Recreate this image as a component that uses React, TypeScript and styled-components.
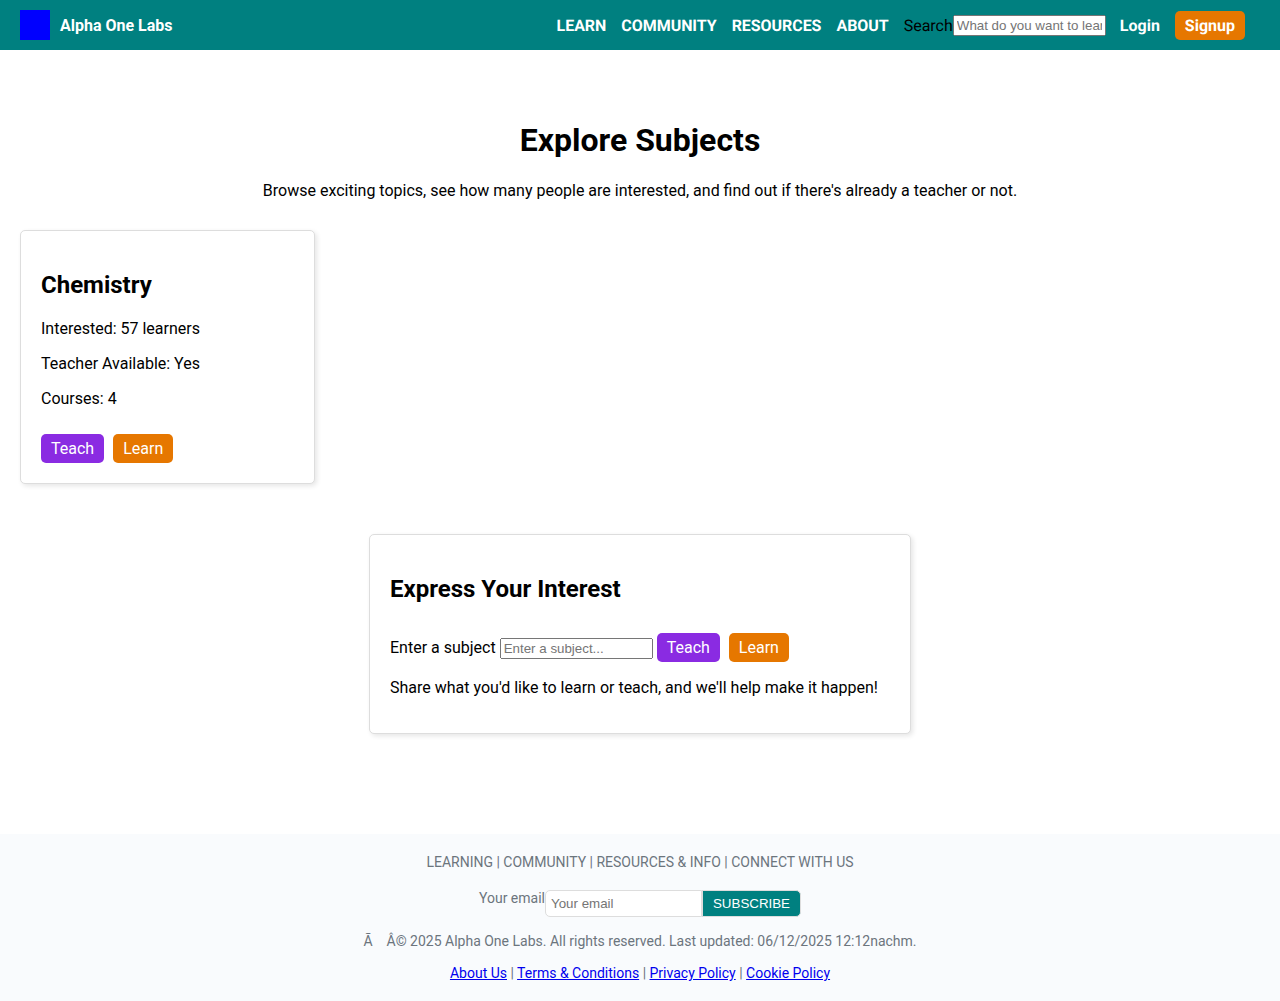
import React from "react";
import styled, { createGlobalStyle } from "styled-components";

const GlobalStyle = createGlobalStyle`
  body { margin: 0; font-family: Roboto, sans-serif; background: #fff; color: #000; }
`;

const Header = styled.header`
  display: flex; justify-content: space-between; align-items: center;
  box-sizing: border-box; height: 50px; padding: 10px 20px; background: #008080; color: #fff;
`;
const Brand = styled.div`display: flex; align-items: center; font-weight: bold;`;
const Logo = styled.div`width: 30px; height: 30px; margin-right: 10px; background: #00f;`;
const Nav = styled.nav`display: flex; align-items: center; text-rendering: geometricPrecision;`;
const NavLink = styled.a`margin-right: 15px; color: #fff; font-weight: bold; text-decoration: none;`;
const MenuLink = styled(NavLink)`letter-spacing: -0.05px;`;
const SearchForm = styled.form`display: flex; align-items: center; margin-right: 14px; color: #000;`;
const Field = styled.input`
  box-sizing: border-box; width: 153px; height: 21px;
  font: 13.333px "Liberation Sans", Arial, sans-serif;
`;
const SignupLink = styled(NavLink)`padding: 5px 10px; border-radius: 5px; background: #e67700;`;

const Main = styled.main`padding: 50px 20px;`;
const Intro = styled.section`text-align: center;`;
const Title = styled.h1`margin: 21px 0 22px; font-size: 32px; line-height: 38px;`;
const Text = styled.p`margin: 16px 0; line-height: 19px;`;
const Subjects = styled.section`
  display: grid; grid-template-columns: repeat(4, 295px); gap: 20px; margin-top: 30px;
`;
const Card = styled.article`
  box-sizing: border-box; padding: 20px; border: 1px solid #ddd; border-radius: 5px;
  background: #fff; box-shadow: 2px 2px 5px rgba(0, 0, 0, 0.1);
`;
const InterestCard = styled(Card)`width: 542px; margin: 50px auto;`;
const Heading = styled.h2`margin: 20px 0; font-size: 24px; line-height: 28px;`;
const Actions = styled.div`display: flex; gap: 9px; margin-top: 26px;`;
const Action = styled.button<{ $color: string }>`
  padding: 5px 10px; border: 0; border-radius: 5px; background: ${(p) => p.$color};
  color: #fff; font: 400 16px/19px Roboto, sans-serif;
`;
const InterestForm = styled.form`
  display: flex; align-items: center; gap: 4px; margin-top: 30px;
  ${Field} { margin-top: 2px; }
  ${Action} + ${Action} { margin-left: 5px; }
`;

const Footer = styled.footer`
  box-sizing: border-box; height: 167px; padding: 20px; background: #f9fbfd; color: #6c757d;
  font-size: 14px; line-height: 16px; text-align: center;
`;
const FooterText = styled.p`margin: 0 0 16px; white-space: pre;`;
const Subscribe = styled.form`display: flex; justify-content: center; margin: 20px 0 16px;`;
const EmailField = styled.input`
  box-sizing: border-box; width: 157px; height: 27px; padding: 5px;
  border: 1px solid #ddd; border-radius: 5px 0 0 5px;
  font: 13.333px "Liberation Sans", Arial, sans-serif;
`;
const SubscribeButton = styled.button`
  box-sizing: border-box; width: 99px; height: 27px; padding: 5px 0; border: 1px solid #ddd;
  border-radius: 0 5px 5px 0; background: #008080; color: #fff;
  font: 13.333px "Liberation Sans", Arial, sans-serif;
`;
const FooterLink = styled.a`color: #0000ee; text-decoration: underline;`;

const navigation = ["LEARN", "COMMUNITY", "RESOURCES", "ABOUT"];
const legal = ["About Us", "Terms & Conditions", "Privacy Policy", "Cookie Policy"];

const RoleActions = () => (
  <>
    <Action type="button" $color="#8a2be2">Teach</Action>
    <Action type="button" $color="#e67700">Learn</Action>
  </>
);

export default function App() {
  return (
    <>
      <GlobalStyle />
      <Header>
        <Brand><Logo />Alpha One Labs</Brand>
        <Nav>
          {navigation.map((item) => <MenuLink key={item} href="#">{item}</MenuLink>)}
          <SearchForm><label htmlFor="search">Search</label><Field id="search" placeholder="What do you want to learn?" /></SearchForm>
          <NavLink href="#">Login</NavLink>
          <SignupLink href="#">Signup</SignupLink>
        </Nav>
      </Header>
      <Main>
        <Intro>
          <Title>Explore Subjects</Title>
          <Text>Browse exciting topics, see how many people are interested, and find out if there's already a teacher or not.</Text>
        </Intro>
        <Subjects>
          <Card>
            <Heading>Chemistry</Heading>
            <Text>Interested: 57 learners</Text>
            <Text>Teacher Available: Yes</Text>
            <Text>Courses: 4</Text>
            <Actions><RoleActions /></Actions>
          </Card>
        </Subjects>
        <InterestCard>
          <Heading>Express Your Interest</Heading>
          <InterestForm>
            <label htmlFor="subject">Enter a subject</label>
            <Field id="subject" placeholder="Enter a subject..." />
            <RoleActions />
          </InterestForm>
          <Text>Share what you'd like to learn or teach, and we'll help make it happen!</Text>
        </InterestCard>
      </Main>
      <Footer>
        <FooterText>LEARNING | COMMUNITY | RESOURCES &amp; INFO | CONNECT WITH US</FooterText>
        <Subscribe>
          <label htmlFor="email">Your email</label>
          <EmailField id="email" placeholder="Your email" />
          <SubscribeButton type="button">SUBSCRIBE</SubscribeButton>
        </Subscribe>
        <FooterText>{"Ã\u00a0\u00a0\u00a0 Â© 2025 Alpha One Labs. All rights reserved. Last updated: 06/12/2025 12:12nachm."}</FooterText>
        <FooterText>
          {legal.map((item, i) => <React.Fragment key={item}>{i > 0 && " | "}<FooterLink href="#">{item}</FooterLink></React.Fragment>)}
        </FooterText>
      </Footer>
    </>
  );
}
